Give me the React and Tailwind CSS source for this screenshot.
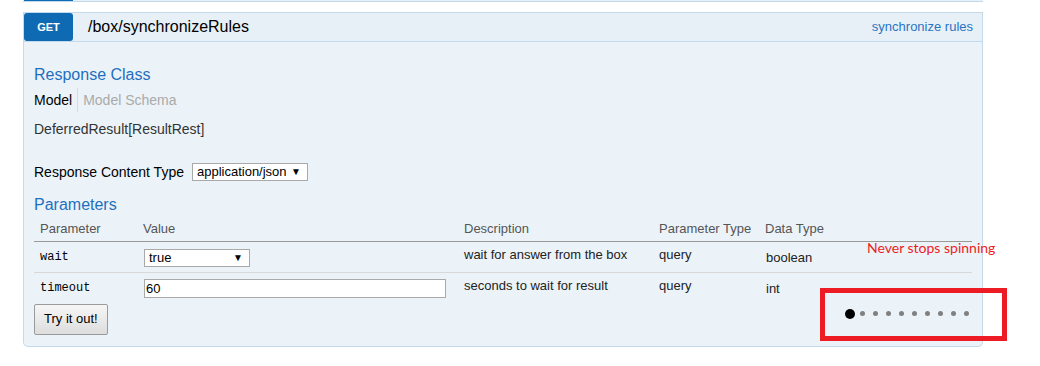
import React from 'react';

const COLS = [
  { label: 'Parameter', w: 'w-[103px]' },
  { label: 'Value', w: 'w-[321px]' },
  { label: 'Description', w: 'w-[195px]' },
  { label: 'Parameter Type', w: 'w-[106px]' },
  { label: 'Data Type', w: 'w-[213px]' },
];

function FakeSelect({ value, className }) {
  return (
    <div
      className={`flex items-center justify-between h-[18px] border border-[#a9a9a9] bg-white pl-[4px] pr-[6px] text-[13px] leading-[16px] text-black ${className}`}
    >
      <span>{value}</span>
      <span className="text-[10px] leading-none">▼</span>
    </div>
  );
}

export default function App() {
  return (
    <div className="relative w-[1040px] h-[366px] bg-white overflow-hidden font-['Liberation_Sans',Arial,sans-serif]">
      {/* end of previous operation block */}
      <div className="ml-[23px] w-[960px] h-[2px] bg-[#e7f0f7] border-b border-[#c3d9ec] flex">
        <div className="ml-[1px] w-[49px] h-[1px] bg-[#0f6ab4]" />
      </div>

      <div className="ml-[23px] mt-[10px] w-[960px]">
        {/* heading */}
        <div className="flex items-center h-[30px] bg-[#e7f0f7] border border-[#c3d9ec]">
          <span className="flex items-center justify-center w-[49px] h-[28px] rounded-[3px] bg-[#0f6ab4] text-white text-[11px] font-bold">
            GET
          </span>
          <span className="ml-[15px] text-[16px] leading-[28px] text-black">/box/synchronizeRules</span>
          <span className="ml-auto pr-[9px] text-[13px] text-[#2a74c4]">synchronize rules</span>
        </div>

        {/* content */}
        <div className="bg-[#ebf3f9] border-x border-b border-[#c3d9ec] rounded-b-[5px] pl-[10px] pr-[10px] pt-[23px] pb-[11px]">
          <h4 className="text-[16px] leading-[19px] text-[#1f6fc0]">Response Class</h4>
          <div className="mt-[4px] flex h-[24px] items-center text-[14px]">
            <span className="text-black pr-[5px]">Model</span>
            <span className="h-[24px] flex items-center border-l border-[#d4dde4] pl-[5px] text-[#aaaaaa]">Model Schema</span>
          </div>
          <div className="mt-[9px] text-[14px] leading-[16px] text-[#333]">DeferredResult[ResultRest]</div>

          <div className="mt-[26px] flex items-center h-[18px] text-[14px] text-black">
            <span>Response Content Type</span>
            <FakeSelect value="application/json" className="ml-[8px] w-[116px]" />
          </div>

          <h4 className="mt-[14px] text-[16px] leading-[19px] text-[#1f6fc0]">Parameters</h4>
          <table className="table-fixed w-[938px] border-collapse text-[13px] leading-[16px]">
            <colgroup>
              {COLS.map((c) => (
                <col key={c.label} className={c.w} />
              ))}
            </colgroup>
            <thead>
              <tr className="border-b border-[#999]">
                {COLS.map((c) => (
                  <th key={c.label} className="pl-[6px] pt-[7px] pb-[4px] text-left font-normal text-[#555]">
                    {c.label}
                  </th>
                ))}
              </tr>
            </thead>
            <tbody className="text-[#222]">
              <tr className="border-b border-[#d8d8d8] align-top">
                <td className="pl-[6px] pt-[7px] h-[31px] font-['Liberation_Mono',monospace] text-[12px] text-black">wait</td>
                <td className="pl-[6px] pt-[7px]">
                  <FakeSelect value="true" className="ml-[1px] w-[106px]" />
                </td>
                <td className="pl-[6px] pt-[5px]">wait for answer from the box</td>
                <td className="pl-[6px] pt-[5px]">query</td>
                <td className="pl-[7px] pt-[8px]">boolean</td>
              </tr>
              <tr className="align-top">
                <td className="pl-[6px] pt-[7px] h-[27px] font-['Liberation_Mono',monospace] text-[12px] text-black">timeout</td>
                <td className="pl-[6px] pt-[6px]">
                  <input
                    readOnly
                    value="60"
                    className="ml-[1px] block w-[302px] h-[19px] border border-[#a9a9a9] bg-white px-[1px] text-[13px] text-black outline-none"
                  />
                </td>
                <td className="pl-[6px] pt-[5px]">seconds to wait for result</td>
                <td className="pl-[6px] pt-[5px]">query</td>
                <td className="pl-[7px] pt-[8px]">int</td>
              </tr>
            </tbody>
          </table>

          <button className="mt-[4px] h-[31px] px-[9px] border border-[#9a9a9a] rounded-[2px] bg-gradient-to-b from-[#f6f6f6] to-[#dddddd] text-[13px] text-black">
            Try it out!
          </button>
        </div>
      </div>

      {/* annotation */}
      <span className="absolute left-[867px] top-[240px] font-['Lato',sans-serif] text-[14px] leading-[16px] text-[#ed1c24]">
        Never stops spinning
      </span>
      <div className="absolute left-[820px] top-[288px] w-[187px] h-[53px] border-[5px] border-[#ed1c24] flex items-center pl-[20px] pb-[2px]">
        <span className="w-[10px] h-[10px] rounded-full bg-black" />
        <div className="ml-[5px] flex items-center gap-[8px]">
          {Array.from({ length: 9 }).map((_, i) => (
            <span key={i} className="w-[5px] h-[5px] rounded-full bg-[#808080]" />
          ))}
        </div>
      </div>
    </div>
  );
}
